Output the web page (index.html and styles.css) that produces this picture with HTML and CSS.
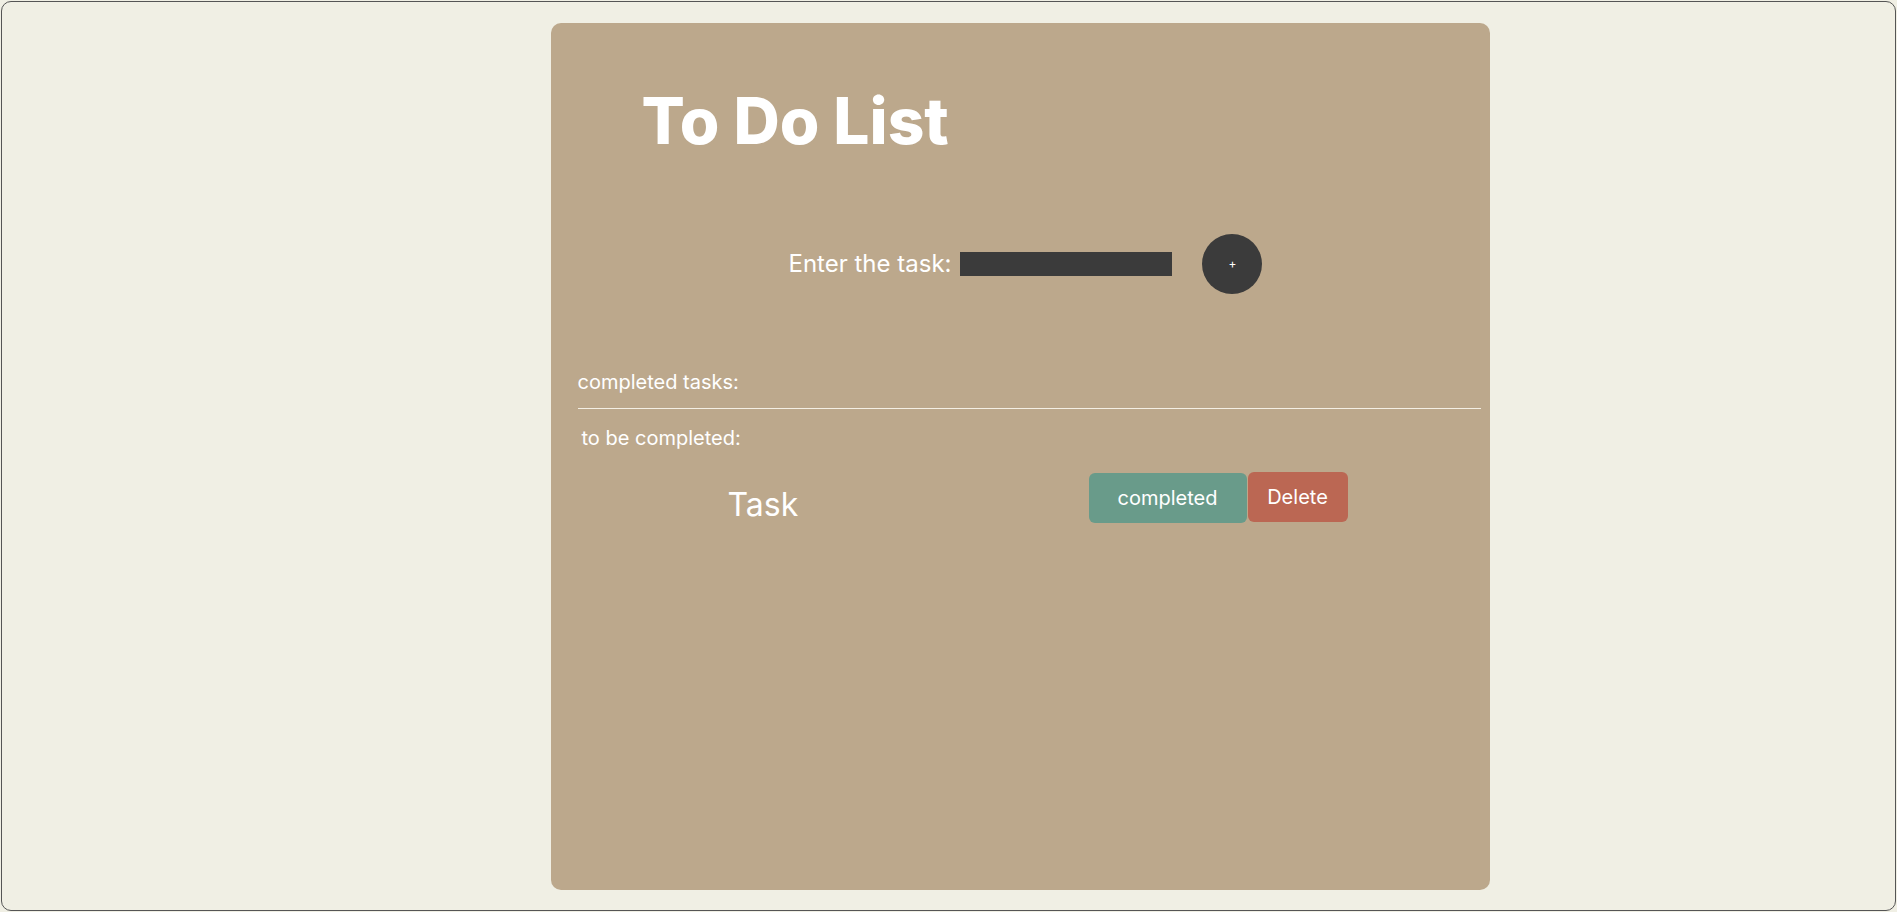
FILE: index.html
```html
<!DOCTYPE html>
<html lang="en">
<head>
<meta charset="utf-8">
<title>To Do List</title>
<link rel="stylesheet" href="styles.css">
</head>
<body>
<div class="frame">
  <main class="card">
    <h1 class="title">To Do List</h1>
    <div class="entry">
      <label class="entry-label" for="task">Enter the task:</label>
      <input class="task-input" id="task" type="text">
      <button class="add-btn" type="button">+</button>
    </div>
    <section class="completed">
      <p class="section-label">completed tasks:</p>
    </section>
    <hr class="divider">
    <section class="pending">
      <p class="section-label pending-label">to be completed:</p>
      <div class="task-row">
        <span class="task-name">Task</span>
        <div class="actions">
          <button class="btn btn-complete" type="button">completed</button>
          <button class="btn btn-delete" type="button">Delete</button>
        </div>
      </div>
    </section>
  </main>
</div>
</body>
</html>
```

FILE: styles.css
```css
html, body {
  margin: 0;
  padding: 0;
  background: #f0efe4;
}

body {
  font-family: Inter, "Noto Sans", sans-serif;
}

.frame {
  margin: 1px;
  height: 910px;
  box-sizing: border-box;
  border: 1.5px solid #555555;
  border-radius: 10px;
  background: #f0efe4;
  padding-top: 20.5px;
  padding-left: 548.5px;
}

.card {
  width: 939px;
  height: 867px;
  box-sizing: border-box;
  background: #bca88c;
  border-radius: 10px;
  padding: 0 9px 0 27px;
  color: #ffffff;
  overflow: hidden;
}

.title {
  margin: 59px 0 0;
  padding-left: 64px;
  font-size: 64px;
  line-height: 77px;
  font-weight: 800;
}

.entry {
  display: flex;
  align-items: center;
  margin-top: 75px;
  padding-left: 211px;
  height: 60px;
}

.entry-label {
  font-size: 24px;
  line-height: 29px;
}

.task-input {
  margin: 0 0 0 9px;
  width: 212px;
  height: 24px;
  padding: 0;
  border: none;
  background: #3b3b3b;
  color: #fff;
  outline: none;
}

.add-btn {
  margin-left: 30px;
  width: 60px;
  height: 60px;
  border: none;
  border-radius: 50%;
  background: #3b3b3b;
  color: #ffffff;
  font-size: 12px;
  font-family: Inter, sans-serif;
  padding: 0;
}

.completed {
  margin-top: 76px;
}

.section-label {
  margin: 0;
  font-size: 20px;
  line-height: 24px;
}

.divider {
  margin: 14px 0 0;
  border: none;
  height: 1px;
  background: #f4efe4;
}

.pending-label {
  margin-top: 17px;
  padding-left: 4px;
}

.task-row {
  display: flex;
  align-items: flex-end;
  margin-top: 21px;
  padding-left: 150px;
}

.task-name {
  width: 361px;
  font-size: 32px;
  line-height: 36px;
}

.actions {
  display: flex;
  align-items: center;
  gap: 1px;
}

.btn {
  height: 50px;
  border: none;
  border-radius: 6px;
  color: #ffffff;
  font-family: Inter, sans-serif;
  font-size: 20px;
  padding: 0;
}

.btn-complete {
  width: 158px;
  background: #699b8a;
  margin-top: 2px;
}

.btn-delete {
  width: 100px;
  background: #bb6753;
}
```
